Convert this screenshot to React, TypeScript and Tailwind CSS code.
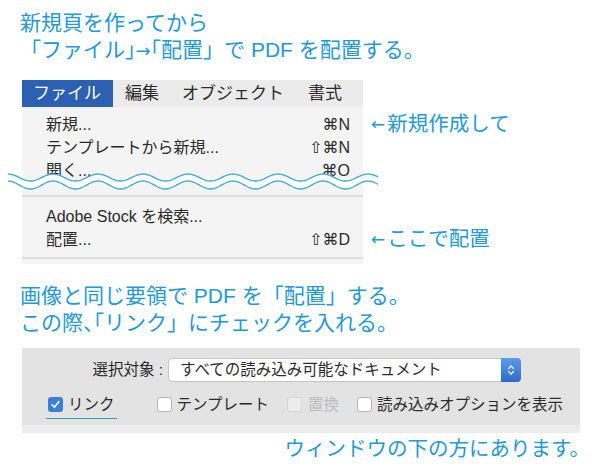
import React from "react";

const SANS = "font-['Liberation_Sans','Noto_Sans_CJK_JP',sans-serif]";
const KEYS = "font-['Liberation_Sans','DejaVu_Sans',sans-serif]";
const ARROW = "font-['DejaVu_Sans',sans-serif]";
const HALF = "[font-feature-settings:'halt']";

function wavePoints(x0: number, x1: number, base: number, amp: number, period: number) {
  const pts: string[] = [];
  for (let x = x0; x <= x1; x += 1) {
    const y = base - amp * Math.cos(((x - x0) / period) * Math.PI * 2);
    pts.push(`${x},${y.toFixed(2)}`);
  }
  return pts;
}

function BrokenEdge() {
  const upper = wavePoints(8, 378, 9.5, 3.5, 45);
  const lower = wavePoints(8, 378, 17, 4, 45);
  const band = `M${upper.join(" L")} L${[...lower].reverse().join(" L")} Z`;
  return (
    <svg
      className="absolute left-0 top-[88px]"
      width="600"
      height="30"
      viewBox="0 0 600 30"
    >
      <path d={band} fill="#ffffff" />
      <path d={`M${upper.join(" L")}`} fill="none" stroke="#3aa9d6" strokeWidth="1.3" />
      <path d={`M${lower.join(" L")}`} fill="none" stroke="#3aa9d6" strokeWidth="1.3" />
    </svg>
  );
}

function Note({ children }: { children: React.ReactNode }) {
  return (
    <span className="ml-[8px] flex items-center whitespace-nowrap text-[20.5px] leading-none text-[#2499d6]">
      <span className={`${ARROW} text-[17px]`}>←</span>
      <span className="ml-[2px]">{children}</span>
    </span>
  );
}

function MenuRow({
  label,
  shortcut,
  note,
}: {
  label: string;
  shortcut?: string;
  note?: string;
}) {
  return (
    <div className="flex h-[23px] items-center">
      <div className="flex h-full w-[341px] items-center justify-between bg-[#f4f4f4] pl-[24px] pr-[13px] text-[16px] text-[#2b2b2b]">
        <span>{label}</span>
        {shortcut && <span className={KEYS}>{shortcut}</span>}
      </div>
      {note && <Note>{note}</Note>}
    </div>
  );
}

function Gap({ h }: { h: string }) {
  return <div className={`w-[341px] bg-[#f4f4f4] ${h}`} />;
}

function Separator() {
  return <div className="h-[2px] w-[341px] bg-[#dddddd]" />;
}

function Checkbox({
  checked,
  disabled,
}: {
  checked?: boolean;
  disabled?: boolean;
}) {
  if (checked) {
    return (
      <span className="flex size-[15px] shrink-0 items-center justify-center rounded-[3px] bg-[#3b80d8]">
        <svg width="11" height="11" viewBox="0 0 11 11">
          <path d="M2 5.8 L4.4 8.3 L9 2.6" fill="none" stroke="#fff" strokeWidth="1.6" strokeLinecap="round" strokeLinejoin="round" />
        </svg>
      </span>
    );
  }
  return (
    <span
      className={
        disabled
          ? "size-[15px] shrink-0 rounded-[3px] border border-[#d6d6d6] bg-[#ececec]"
          : "size-[15px] shrink-0 rounded-[3px] border border-[#b5b5b5] bg-white"
      }
    />
  );
}

export default function App() {
  return (
    <div className={`relative h-[476px] w-[600px] overflow-hidden bg-white ${SANS}`}>
      <div className="pl-[20px] pt-[9px] text-[21px] leading-[27px] text-[#2499d6]">
        <p>新規頁を作ってから</p>
        <p>
          「ファイル<span className={HALF}>」</span>
          <span className={`${ARROW} text-[18px]`}>→</span>
          <span className={HALF}>「</span>配置」で PDF を配置する。
        </p>
      </div>

      <div className="relative mt-[16px] pl-[22px]">
        <div className="flex h-[27px] w-[341px] items-center bg-[#ebebeb] text-[17px] text-[#2b2b2b]">
          <span className="flex h-full items-center bg-[#2b60b2] pl-[11px] pr-[12px] text-white">
            ファイル
          </span>
          <span className="ml-[12px]">編集</span>
          <span className="ml-[23px]">オブジェクト</span>
          <span className="ml-[24px]">書式</span>
        </div>
        <Gap h="h-[6px]" />
        <MenuRow label="新規..." shortcut="⌘N" note="新規作成して" />
        <MenuRow label="テンプレートから新規..." shortcut="⇧⌘N" />
        <MenuRow label="開く..." shortcut="⌘O" />
        <Gap h="h-[13px]" />
        <Separator />
        <Gap h="h-[8px]" />
        <MenuRow label="Adobe Stock を検索..." />
        <MenuRow label="配置..." shortcut="⇧⌘D" note="ここで配置" />
        <Gap h="h-[6px]" />
        <Separator />
        <Gap h="h-[5px]" />
        <BrokenEdge />
      </div>

      <div className="mt-[18px] pl-[20px] text-[21px] leading-[27px] text-[#2499d6]">
        <p>画像と同じ要領で PDF を「配置」する。</p>
        <p>
          この際<span className={HALF}>、</span>「リンク」にチェックを入れる。
        </p>
      </div>

      <div className="ml-[22px] mt-[12px] w-[558px] bg-[#ececec]">
        <div className="h-[77px] bg-[#e3e3e3] pt-[10px]">
          <div className="flex h-[24px] items-center">
            <span className="w-[141px] text-right text-[15.5px] text-[#2b2b2b]">
              選択対象 :
            </span>
            <div className="ml-[5px] flex h-[24px] w-[353px] items-center justify-between rounded-[4px] border border-[#c4c4c4] bg-white pl-[11px] text-[15.5px] text-[#2b2b2b]">
              <span>すべての読み込み可能なドキュメント</span>
              <span className="-my-px -mr-px flex h-[24px] w-[20px] items-center justify-center rounded-r-[4px] bg-gradient-to-b from-[#5c9cea] to-[#2c6bcc]">
                <svg width="8" height="12" viewBox="0 0 8 12">
                  <path d="M1.5 4.5 L4 2 L6.5 4.5 M1.5 7.5 L4 10 L6.5 7.5" fill="none" stroke="#fff" strokeWidth="1.2" strokeLinecap="round" strokeLinejoin="round" />
                </svg>
              </span>
            </div>
          </div>

          <div className="mt-[15px] flex items-start text-[15.5px] leading-[15px] text-[#2b2b2b]">
            <div className="ml-[24px] flex items-center gap-[5px] border-b-[1.5px] border-[#2aa0d8] pb-[6px] pl-[2px] pr-[2px]">
              <Checkbox checked />
              <span>リンク</span>
            </div>
            <div className="ml-[40px] flex items-center gap-[5px]">
              <Checkbox />
              <span>テンプレート</span>
            </div>
            <div className="ml-[18px] flex items-center gap-[6px]">
              <Checkbox disabled />
              <span className="text-[#bdbdbd]">置換</span>
            </div>
            <div className="ml-[18px] flex items-center gap-[5px]">
              <Checkbox />
              <span>読み込みオプションを表示</span>
            </div>
          </div>
        </div>
        <div className="h-[8px]" />
      </div>

      <p className="mt-[2px] pr-[10px] text-right text-[20.5px] leading-[28px] text-[#2499d6]">
        ウィンドウの下の方にあります。
      </p>
    </div>
  );
}
